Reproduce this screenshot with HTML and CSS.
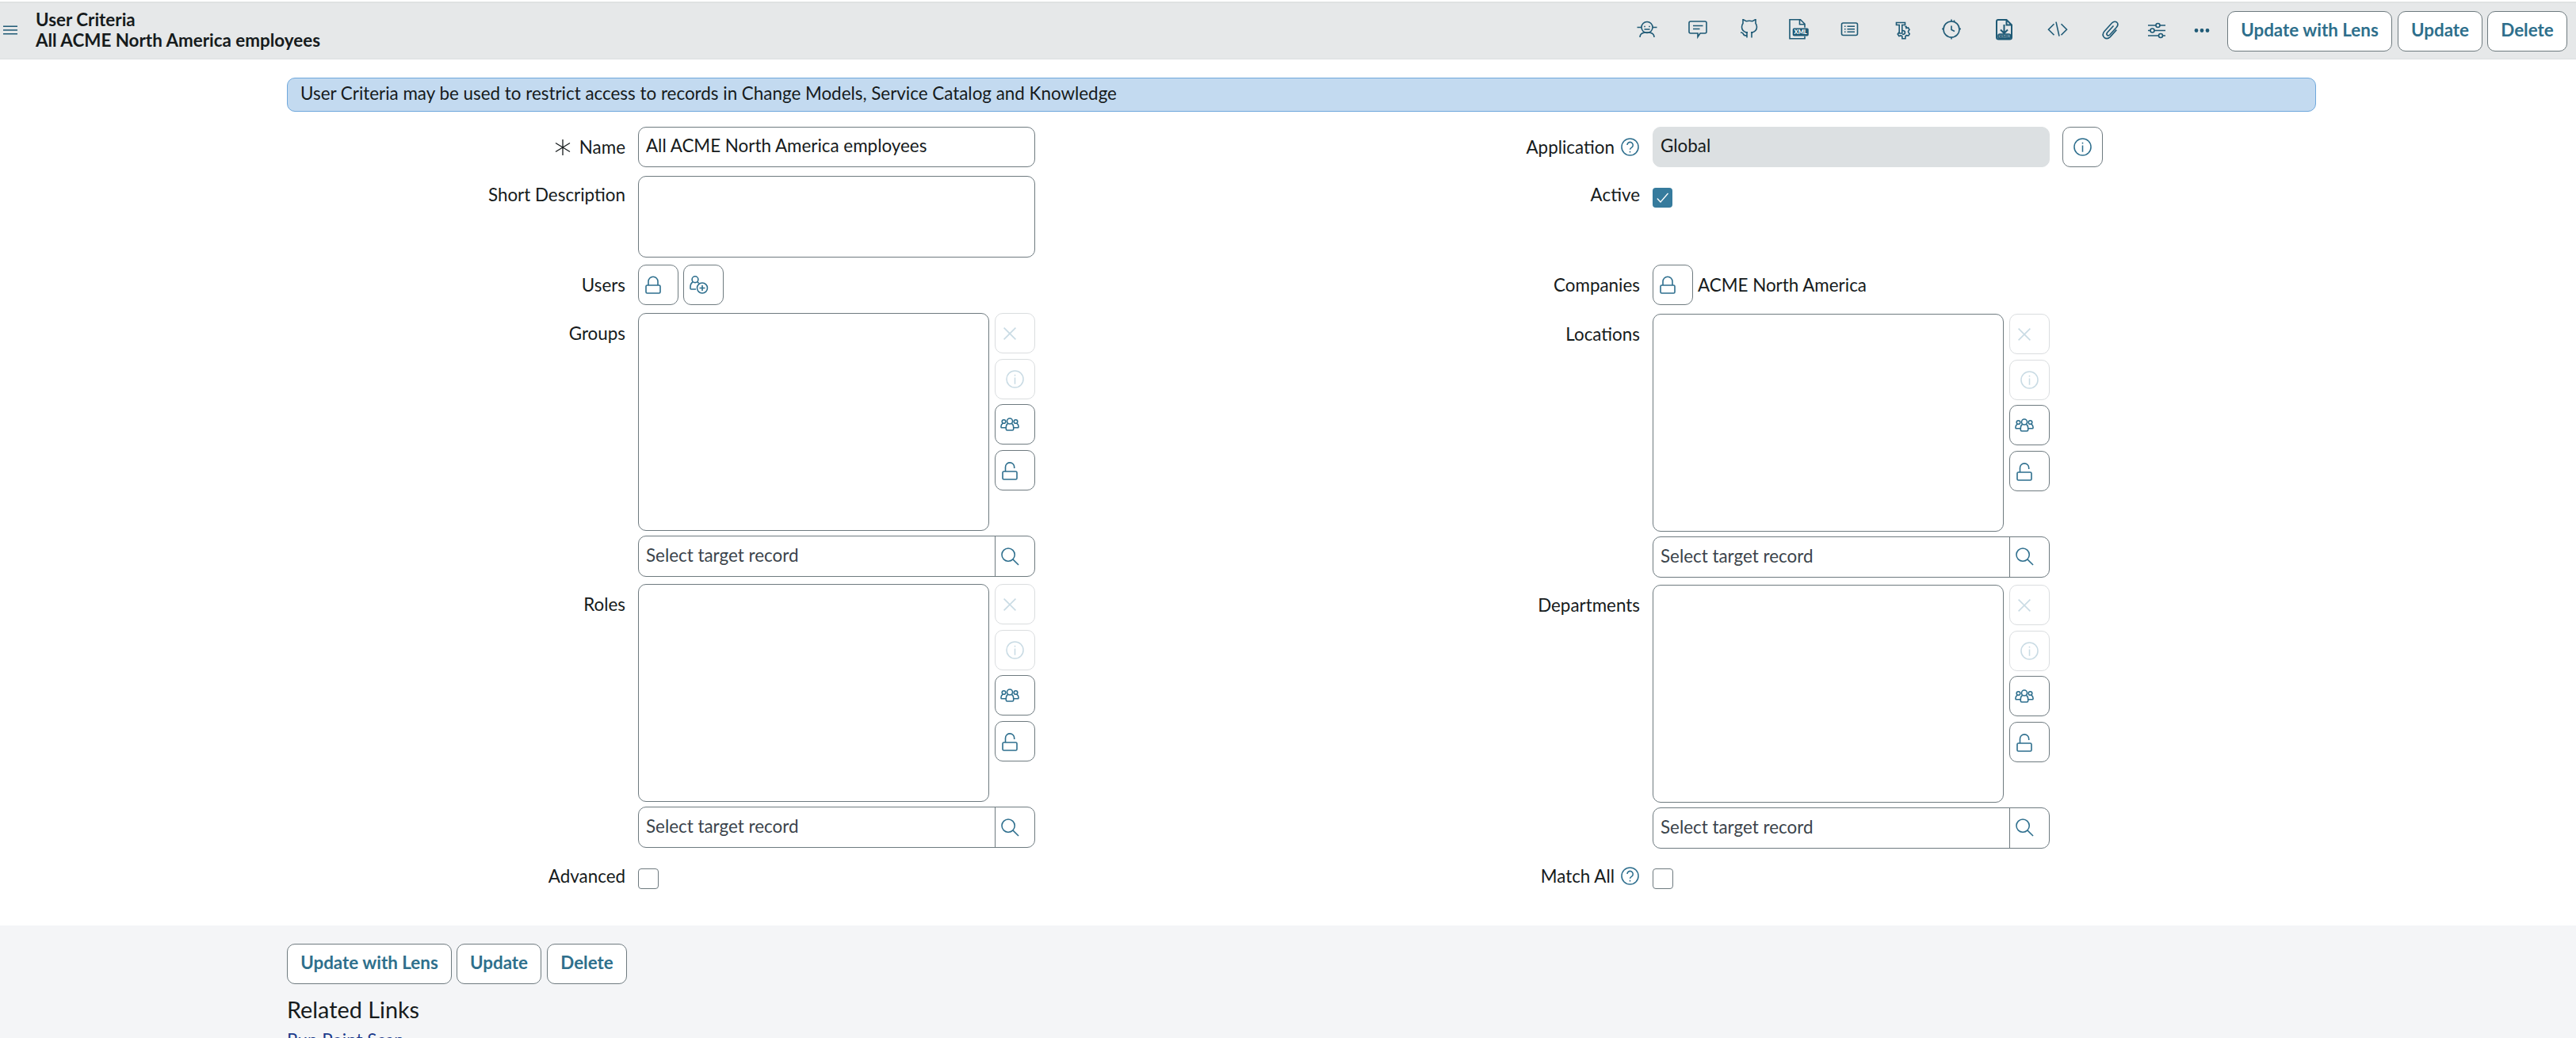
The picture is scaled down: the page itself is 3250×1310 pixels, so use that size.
FILE: index.html
```html
<!DOCTYPE html>
<html lang="en">
<head>
<meta charset="utf-8">
<title>User Criteria</title>
<link rel="stylesheet" href="styles.css">
</head>
<body>
<svg class="sprite" width="0" height="0">
  <symbol id="lock" viewBox="0 0 20 23"><rect x="1" y="12" width="18" height="10" rx="1.5"/><path d="M4 12V7.2a6 6 0 0 1 12 0V12"/></symbol>
  <symbol id="unlock" viewBox="0 0 20 23"><rect x="1" y="12" width="18" height="10" rx="1.5"/><path d="M4.5 12V6.500a5.600 5.600 0 0 1 11.200 0V8"/></symbol>
  <symbol id="adduser" viewBox="0 0 24 23"><circle cx="7" cy="4.700" r="3.900"/><path d="M4.300 7.800C2 9.200 1 11 1 14v2q0 1 1 1h6M9.700 7.800q1.300.700 2 1.700"/><circle cx="16" cy="15.500" r="6.500"/><path d="M16 12v7M12.500 15.500h7"/></symbol>
  <symbol id="close" viewBox="0 0 16 16"><path d="M.6.6l14.800 14.800M15.400.6L.6 15.400"/></symbol>
  <symbol id="info" viewBox="0 0 24 24"><circle cx="12" cy="12" r="11"/><path d="M12 10v8.500M12 6v1.800"/></symbol>
  <symbol id="help" viewBox="0 0 24 24"><circle cx="12" cy="12" r="11"/><path d="M8.300 9.500a3.800 3.800 0 1 1 6.200 2.900Q12 13.800 12 15.500M12 17.500v1.800"/></symbol>
  <symbol id="group" viewBox="0 0 24 17"><circle cx="12" cy="4.500" r="3.500"/><path d="M9.500 7.500Q7.300 9 7.300 12v2.500q0 1.500 1.500 1.500h6.400q1.500 0 1.500-1.500V12q0-3-2.200-4.500"/><circle cx="4.500" cy="5" r="2.300"/><circle cx="19.500" cy="5" r="2.300"/><path d="M3.200 7.200Q1 8.500 1 11v1q0 .8.800.8H7M20.800 7.200Q23 8.500 23 11v1q0 .8-.8.8H17"/></symbol>
  <symbol id="search" viewBox="0 0 24 24"><circle cx="9.500" cy="9.500" r="8.500"/><path d="M15.500 15.500l7.500 7.500"/></symbol>
</svg>

<header class="topbar">
  <svg class="burger" viewBox="0 0 18 12"><path d="M0 1.200h18M0 6h18M0 10.800h18"/></svg>
  <h1 class="title">User Criteria<br>All ACME North America employees</h1>
  <nav class="tools">
    <svg class="tool" viewBox="0 .5 28 28"><circle cx="14" cy="11" r="7"/><path d="M1.500 11H7M21 11h5.500M10.500 13.500h7M11 9.300v1.400M17 9.300v1.400M5 23.500q0-5 6-6h6q6 1 6 6"/></svg>
    <svg class="tool" viewBox="0 1 28 28"><path d="M5 4h18q2 0 2 2v11q0 2-2 2h-6l-3 4.500V19H5q-2 0-2-2V6q0-2 2-2zM8 9.500h12.500M8 13.500h8.500"/></svg>
    <svg class="tool" viewBox="0 1.500 28 28"><path d="M11 25v-6.500C6 17.500 4.500 15 4.500 11.500q0-2.500 1.500-4.500V2l4 2.200q4-1 8 0L22 2v5q1.500 2 1.500 4.500c0 3.500-1.500 6-6.500 7V25M9 18.400h3M16 18.400h3M3 18.500q3 0 3.500 2t4.500 2"/></svg>
    <svg class="tool" viewBox="0 1.200 28 28"><path d="M22 12V7.500L16.500 2H3v24h19v-3M15.500 2v6H22"/><rect class="solid" x="7.500" y="13.500" width="18.500" height="8.500" rx="1"/><text class="xml" x="16.700" y="20.600">XML</text></svg>
    <svg class="tool" viewBox="0 1.200 28 28"><rect x="3.500" y="6.200" width="20" height="15.500" rx="2"/><path d="M10.500 10.500H20M10.500 14H20M10.500 17.500H20M7 10.500h1.500M7 14h1.500M7 17.500h1.500"/></svg>
    <svg class="tool" viewBox="0 0 28 28"><path d="M5.500 4.500h11v3h-3.700V18H9.200V7.500H5.500zM16.300 9.500h1.700v2l2.500-.5 1.500 2.500-1.500 2 .2 1.300 1.500 2-1.300 2.200-2.700-.3-1.300 1.200v2.800h-4v-2.800l-1.500-1-2.500.6-1.700-2.500 1.700-2.300"/><path d="M13 14.500q3.500 0 3.500 2.500t-3.500 2.500"/></svg>
    <svg class="tool" viewBox="0 .5 28 28"><circle cx="14" cy="13.500" r="10"/><path d="M14 9v5l4 2M14 1v3M17.500 2v2.500M2 13h2.500M23.500 13H26M14 23.500V26"/></svg>
    <svg class="tool" viewBox="0 0 28 28"><path class="bold" d="M6 1h10.500L23 7.500V23q0 2.500-2.500 2.500H6.500Q4 25.500 4 23V3q0-2 2-2zM16.500 1v6.500H23M13.500 7v11M9 13.500l4.500 4.500 4.500-4.500"/><rect class="solid pale" x="6" y="19" width="15.500" height="5.500" rx="2"/><text class="xml small" x="13.700" y="24">XML</text></svg>
    <svg class="tool" viewBox="0 1.300 28 28"><path d="M9.500 7.500l-7 7 7 7M18.500 7.500l7 7-7 7M12 5l4 18"/></svg>
    <svg class="tool" viewBox="0 0 28 28"><path d="M17.500 8.500l-8 8.700q-1.400 2 .2 3.300 1.500 1 3-.5l8.600-9.500q3.200-4 .2-6.500-3-2-6 1L6 15.500q-3.600 4.300-.2 7.800 3.700 3 7.500-.7l8-9"/></svg>
    <svg class="tool" viewBox="0 -.5 28 28"><path d="M3 7.500h10M18 7.500h7M3 14h3M11 14h14M3 20.500h13.500M21.500 20.500H25"/><circle cx="15.500" cy="7.500" r="2.500"/><circle cx="8.500" cy="14" r="2.500"/><circle cx="19" cy="20.500" r="2.500"/></svg>
    <svg class="tool" viewBox="0 -.5 28 28"><g class="solid"><circle cx="7" cy="14" r="1.600"/><circle cx="14" cy="14" r="1.600"/><circle cx="21" cy="14" r="1.600"/></g></svg>
  </nav>
  <div class="actions">
    <button class="btn lens">Update with Lens</button>
    <button class="btn update">Update</button>
    <button class="btn delete">Delete</button>
  </div>
</header>

<main class="content">
  <div class="notice">User Criteria may be used to restrict access to records in Change Models, Service Catalog and Knowledge</div>
  <form class="form">
    <div class="column">
      <div class="row row-name">
        <label class="label"><svg class="required" viewBox="0 0 20 20"><path d="M10 0v20M1 4.500l18 11M19 4.500l-18 11"/></svg>Name</label>
        <input class="field" value="All ACME North America employees">
      </div>
      <div class="row row-desc">
        <label class="label">Short Description</label>
        <textarea class="field area"></textarea>
      </div>
      <div class="row row-users">
        <label class="label">Users</label>
        <div class="inline">
          <button type="button" class="square"><svg class="i-lock"><use href="#lock"/></svg></button>
          <button type="button" class="square"><svg class="i-add"><use href="#adduser"/></svg></button>
        </div>
      </div>
      <div class="row row-list">
        <label class="label">Groups</label>
        <div class="picker">
          <div class="list"></div>
          <div class="side">
            <button type="button" class="square off"><svg class="i-close"><use href="#close"/></svg></button>
            <button type="button" class="square off mid"><svg class="i-info"><use href="#info"/></svg></button>
            <button type="button" class="square"><svg class="i-group"><use href="#group"/></svg></button>
            <button type="button" class="square"><svg class="i-lock open"><use href="#unlock"/></svg></button>
          </div>
          <div class="lookup"><span class="hint">Select target record</span><span class="find"><svg class="i-search"><use href="#search"/></svg></span></div>
        </div>
      </div>
      <div class="row row-list">
        <label class="label">Roles</label>
        <div class="picker">
          <div class="list"></div>
          <div class="side">
            <button type="button" class="square off"><svg class="i-close"><use href="#close"/></svg></button>
            <button type="button" class="square off mid"><svg class="i-info"><use href="#info"/></svg></button>
            <button type="button" class="square"><svg class="i-group"><use href="#group"/></svg></button>
            <button type="button" class="square"><svg class="i-lock open"><use href="#unlock"/></svg></button>
          </div>
          <div class="lookup"><span class="hint">Select target record</span><span class="find"><svg class="i-search"><use href="#search"/></svg></span></div>
        </div>
      </div>
      <div class="row row-check">
        <label class="label">Advanced</label>
        <span class="check"></span>
      </div>
    </div>

    <div class="column right">
      <div class="row row-name">
        <label class="label">Application<svg class="i-help"><use href="#help"/></svg></label>
        <input class="field readonly" value="Global" readonly>
        <button type="button" class="square mid apart"><svg class="i-info"><use href="#info"/></svg></button>
      </div>
      <div class="row row-desc">
        <label class="label">Active</label>
        <span class="check on"><svg class="tick" viewBox="0 0 16 13"><path d="M.8 7.500L5 12 14.500 1"/></svg></span>
      </div>
      <div class="row row-users">
        <label class="label">Companies</label>
        <div class="inline">
          <button type="button" class="square"><svg class="i-lock"><use href="#lock"/></svg></button>
          <span class="value">ACME North America</span>
        </div>
      </div>
      <div class="row row-list">
        <label class="label">Locations</label>
        <div class="picker">
          <div class="list"></div>
          <div class="side">
            <button type="button" class="square off"><svg class="i-close"><use href="#close"/></svg></button>
            <button type="button" class="square off mid"><svg class="i-info"><use href="#info"/></svg></button>
            <button type="button" class="square"><svg class="i-group"><use href="#group"/></svg></button>
            <button type="button" class="square"><svg class="i-lock open"><use href="#unlock"/></svg></button>
          </div>
          <div class="lookup"><span class="hint">Select target record</span><span class="find"><svg class="i-search"><use href="#search"/></svg></span></div>
        </div>
      </div>
      <div class="row row-list">
        <label class="label">Departments</label>
        <div class="picker">
          <div class="list"></div>
          <div class="side">
            <button type="button" class="square off"><svg class="i-close"><use href="#close"/></svg></button>
            <button type="button" class="square off mid"><svg class="i-info"><use href="#info"/></svg></button>
            <button type="button" class="square"><svg class="i-group"><use href="#group"/></svg></button>
            <button type="button" class="square"><svg class="i-lock open"><use href="#unlock"/></svg></button>
          </div>
          <div class="lookup"><span class="hint">Select target record</span><span class="find"><svg class="i-search"><use href="#search"/></svg></span></div>
        </div>
      </div>
      <div class="row row-check">
        <label class="label">Match All<svg class="i-help"><use href="#help"/></svg></label>
        <span class="check"></span>
      </div>
    </div>
  </form>
</main>

<footer class="footer">
  <div class="actions">
    <button class="btn lens">Update with Lens</button>
    <button class="btn update">Update</button>
    <button class="btn delete">Delete</button>
  </div>
  <h2 class="related">Related Links</h2>
  <a class="link">Run Point Scan</a>
</footer>
</body>
</html>
```
FILE: styles.css
```css
* { box-sizing: border-box; }
body {
  margin: 0;
  height: 1310px;
  overflow: hidden;
  display: flex;
  flex-direction: column;
  background: #fff;
  color: #161b1c;
  font-family: Lato, "Liberation Sans", sans-serif;
  font-size: 22.4px;
  line-height: 26px;
}
button, input, textarea { font: inherit; color: inherit; margin: 0; }
svg { fill: none; stroke: #2e6f8e; stroke-width: 1.6; flex: none; display: block; }
.sprite { position: absolute; }

/* Header */
.topbar {
  flex: none;
  height: 73px;
  margin-top: 2px;
  border-top: 2px solid #dfe2e2;
  border-bottom: 1px solid #dcdfe1;
  background: #e6e8e9;
  display: flex;
  align-items: flex-start;
  padding-right: 11px;
}
.burger { width: 18px; height: 12px; margin: 28px 0 0 4px; stroke: #1f5a76; }
.title { margin: 8px 0 0 23px; font-size: 22.4px; line-height: 26px; font-weight: 700; }
.tools { display: flex; margin: 20px 18px 0 auto; }
.tool { width: 28px; height: 28px; stroke: #1f5a76; }
.tool:nth-child(2) { margin-left: 35.5px; }
.tool:nth-child(3) { margin-left: 37px; }
.tool:nth-child(4) { margin-left: 34.5px; }
.tool:nth-child(5) { margin-left: 36.5px; }
.tool:nth-child(6) { margin-left: 39px; }
.tool:nth-child(7) { margin-left: 33.5px; }
.tool:nth-child(8) { margin-left: 39px; }
.tool:nth-child(9) { margin-left: 38.5px; }
.tool:nth-child(10) { margin-left: 39.5px; }
.tool:nth-child(n+11) { margin-left: 29.5px; }
.tool .bold { stroke-width: 2; }
.solid { fill: #1f5a76; }
.pale { fill: #6d93a4; }
.xml { fill: #fff; stroke: none; font: 900 7.5px Lato, sans-serif; text-anchor: middle; }
.xml.small { font-size: 6px; fill: #1f5a76; }
.actions { display: flex; gap: 6px; }
.topbar .actions { margin-top: 10px; }
.topbar .lens, .footer .update { margin-right: 1px; }
.btn {
  height: 51px;
  padding: 0 0 4px;
  border: 1px solid #6e7a7f;
  border-radius: 10px;
  background: #fff;
  color: #2e6f8c;
  font-weight: 700;
}
.lens { width: 208px; }
.update { width: 107px; }
.delete { width: 101px; }

/* Form */
.content { flex: none; height: 1093px; padding: 23px 328px 0 362px; }
.notice {
  height: 43px;
  padding: 6px 16px;
  border: 1px solid #6fa8dc;
  border-radius: 10px;
  background: #c3daf0;
}
.form { display: flex; margin-top: 19px; }
.column { width: 1280px; }
.row { display: flex; align-items: flex-start; }
.row-name { height: 62px; }
.row-desc { height: 112px; }
.row-users { height: 61px; }
.row-list { height: 342px; }
.right .row-users { height: 62px; }
.row-check { padding-top: 17px; }
.right .row-check { padding-top: 16px; }
.label {
  width: 427px;
  margin-right: 16px;
  padding-top: 13px;
  display: flex;
  justify-content: flex-end;
}
.row-desc .label { padding-top: 11px; }
.row-check .label { padding-top: 0; margin-top: -3px; }
.required { width: 20px; height: 20px; margin: 3px 11px 0 0; stroke: #161b1c; stroke-width: 1.3; }
.i-help { width: 23px; height: 23px; margin: 1px 1px 0 8px; }
.field {
  width: 501px;
  height: 51px;
  padding: 0 9px 4px;
  border: 1px solid #6e7a7f;
  border-radius: 10px;
  background: #fff;
  outline: 0;
}
.area { height: 103px; resize: none; }
.readonly { border-color: #dce0e2; background: #dce0e2; }
.check { width: 26px; height: 26px; border: 1px solid #6e7a7f; border-radius: 4px; }
.row-desc .check { margin-top: 15px; }
.check.on { width: 25px; height: 25px; border: 0; background: #367b9d; padding: 6px 5px; }
.tick { width: 16px; height: 13px; stroke: #fff; stroke-width: 1.3; }
.inline { display: flex; gap: 6px; }
.value { padding-top: 13px; }
.square {
  width: 51px;
  height: 51px;
  padding: 0 0 0 8px;
  border: 1px solid #6e7a7f;
  border-radius: 10px;
  background: #fff;
  display: flex;
  align-items: center;
  flex: none;
}
.square.mid { padding-left: 13px; }
.apart { margin-left: 16px; }
.off { border-color: #dadddf; }
.off svg { stroke: #c9dbe4; }
.i-lock { width: 20px; height: 23px; }
.i-lock.open { margin-top: 3px; }
.i-add { width: 24px; height: 23px; margin-left: -1px; }
.i-close { width: 16px; height: 16px; margin-left: 2px; }
.i-info { width: 23px; height: 23px; }
.i-group { width: 24px; height: 17px; margin-left: -2px; }
.i-search { width: 23px; height: 23px; }
.picker {
  width: 501px;
  display: grid;
  grid-template-columns: 443px 51px;
  grid-template-rows: 275px 52px;
  column-gap: 7px;
  row-gap: 6px;
}
.list { border: 1px solid #6e7a7f; border-radius: 10px; }
.side { display: flex; flex-direction: column; gap: 6.6px; }
.lookup {
  grid-column: 1 / 3;
  display: flex;
  border: 1px solid #6e7a7f;
  border-radius: 10px;
  color: #3b444b;
}
.hint { flex: 1; padding: 11px 9px; }
.find { width: 50px; border-left: 1px solid #6e7a7f; padding: 14px 0 0 7px; }
.right .find { padding-top: 13px; }

/* Footer */
.footer { flex: 1; background: #f4f5f7; padding: 23px 362px 0; }
.related { margin: 15px 0 0; font-size: 28.8px; line-height: 34px; font-weight: 400; }
.link { display: block; margin-top: 9px; color: #1d3c8c; }
```
